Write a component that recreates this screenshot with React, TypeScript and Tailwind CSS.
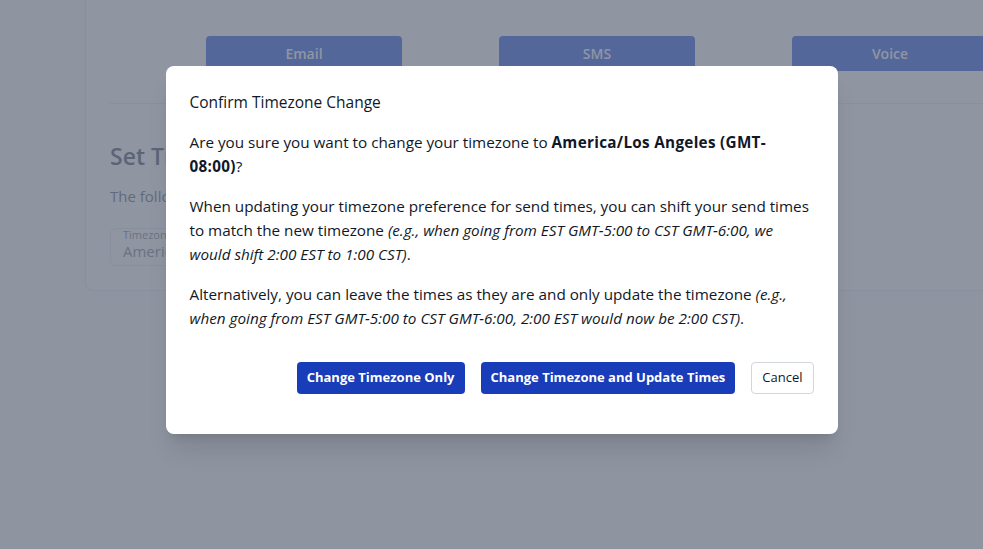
import React from 'react';

const channels = ['Email', 'SMS', 'Voice'];

const App: React.FC = () => {
  return (
    <div className="relative h-[549px] w-full overflow-hidden bg-gray-50 font-['Open_Sans','Segoe_UI',sans-serif] text-gray-900">
      {/* Page behind the modal */}
      <div className="ml-[85px] w-[1100px] rounded-b-lg border border-t-0 border-gray-200 bg-white px-6 pb-6">
        <div className="flex gap-[97px] pl-[96px] pt-9">
          {channels.map((c) => (
            <button
              key={c}
              className="h-[35px] w-[196px] rounded bg-blue-700 text-sm font-semibold text-white"
            >
              {c}
            </button>
          ))}
        </div>
        <div className="mt-8 border-t border-gray-200" />
        <h2 className="mt-9 text-[23px] font-semibold leading-8 text-gray-700">Set Timezone</h2>
        <p className="mt-3 text-[15px] leading-6 text-gray-600">
          The following timezone will be used for all of your scheduled send times.
        </p>
        <div className="mt-5 h-[38px] w-[320px] rounded-md border border-gray-200 px-3">
          <div className="text-[11px] font-medium leading-3 text-gray-500">Timezone</div>
          <div className="text-[15px] leading-5 text-gray-500">America/New York (GMT-05:00)</div>
        </div>
      </div>

      {/* Overlay */}
      <div className="absolute inset-0 bg-gray-500/75" />

      {/* Modal */}
      <div className="absolute inset-0 flex justify-center pl-5 pt-[66px]">
        <div className="h-fit w-[672px] rounded-lg bg-white px-6 pb-10 pt-6 shadow-xl">
          <h3 className="text-[15.5px] font-medium leading-6 text-gray-900">Confirm Timezone Change</h3>
          <p className="mt-4 text-[15.25px] leading-6">
            Are you sure you want to change your timezone to{' '}
            <strong className="font-bold tracking-[0.02em]">America/Los Angeles (GMT-08:00)</strong>?
          </p>
          <p className="mt-4 text-[15.25px] leading-6">
            When updating your timezone preference for send times, you can shift your send times
            to match the new timezone{' '}
            <em>(e.g., when going from EST GMT-5:00 to CST GMT-6:00, we would shift 2:00 EST to 1:00 CST)</em>.
          </p>
          <p className="mt-4 text-[15.25px] leading-6">
            Alternatively, you can leave the times as they are and only update the timezone{' '}
            <em>(e.g., when going from EST GMT-5:00 to CST GMT-6:00, 2:00 EST would now be 2:00 CST)</em>.
          </p>
          <div className="mt-8 flex justify-end gap-4">
            <button className="h-8 rounded bg-blue-800 px-2.5 text-[13px] font-bold text-white">
              Change Timezone Only
            </button>
            <button className="h-8 rounded bg-blue-800 px-2.5 text-[13px] font-bold text-white">
              Change Timezone and Update Times
            </button>
            <button className="h-8 rounded border border-gray-300 bg-white px-2.5 text-[13px] text-gray-900">
              Cancel
            </button>
          </div>
        </div>
      </div>
    </div>
  );
};

export default App;
